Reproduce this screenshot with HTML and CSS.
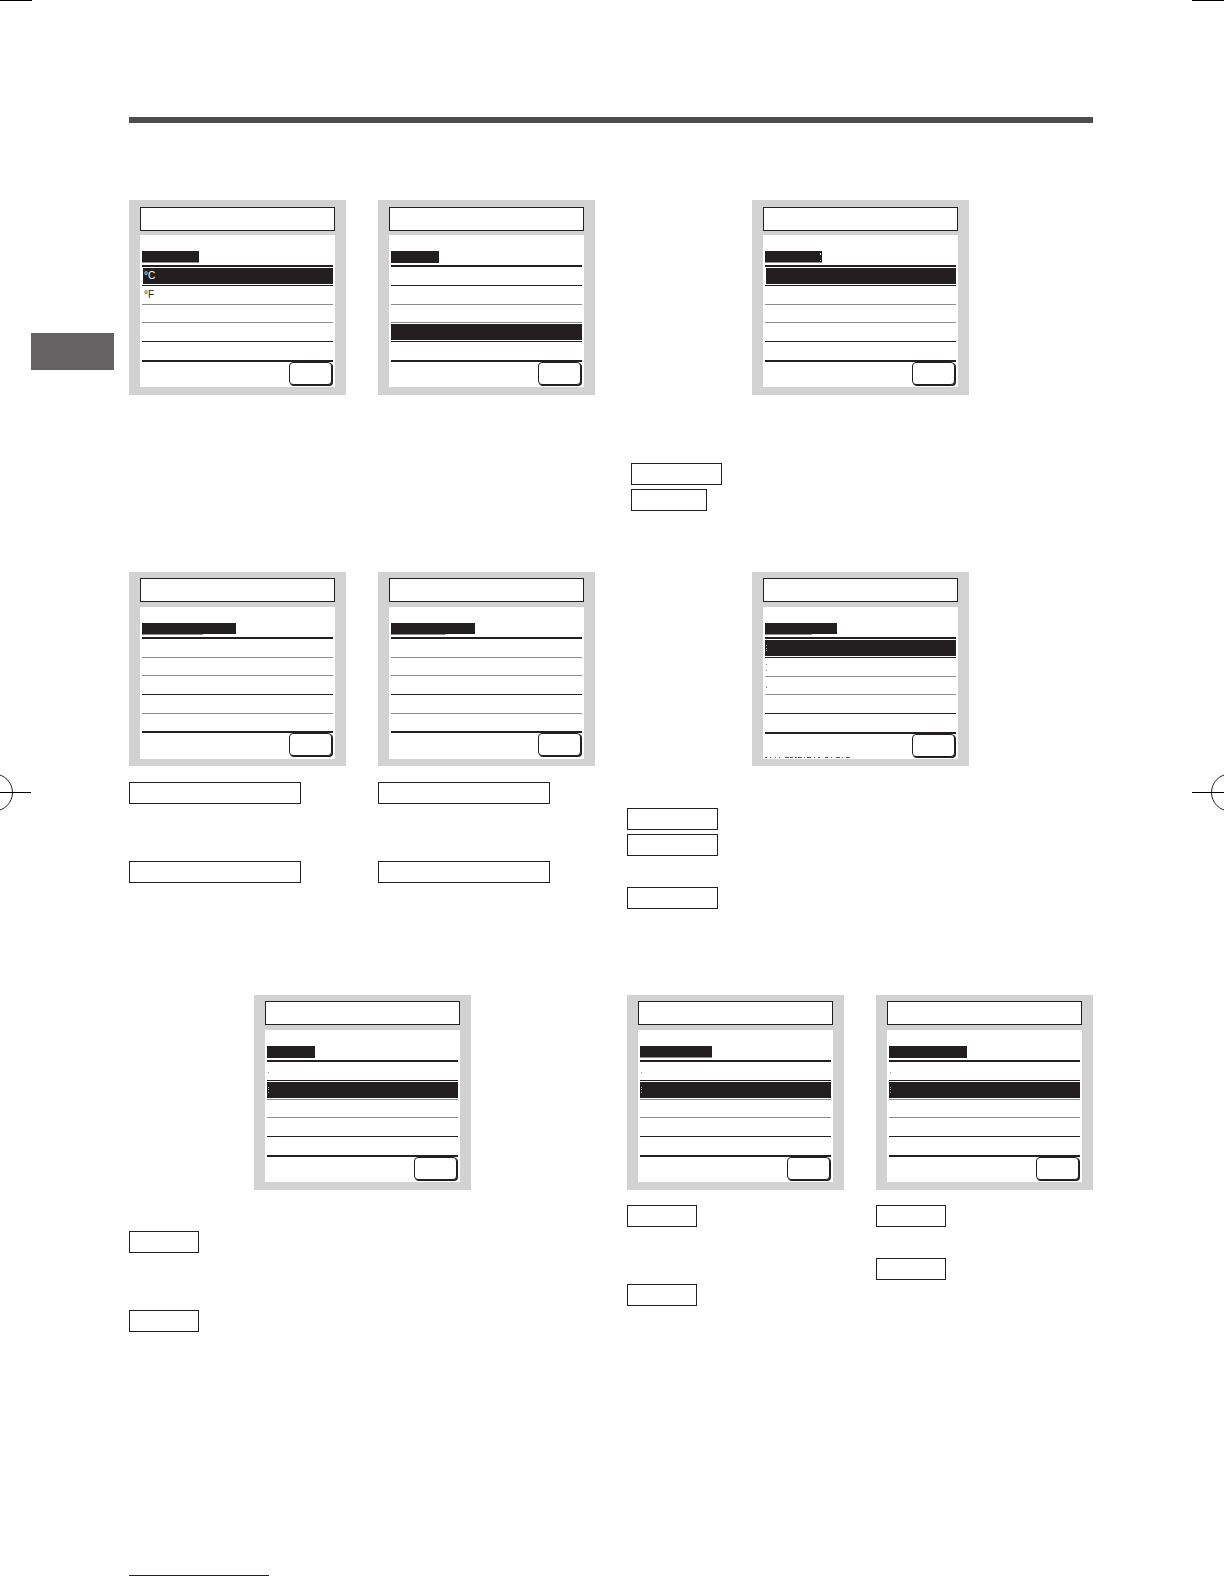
FILE: index.html
```
<!DOCTYPE html>
<html lang="en">
<head>
    <meta charset="UTF-8">
    <meta name="viewport" content="width=device-width, initial-scale=1.0">
    <title>Display settings</title>
    <link rel="stylesheet" href="styles.css">
</head>
<body>
    <aside class="margin">
        <div class="crop"></div>
        <div class="tab"></div>
        <svg class="mark" width="32" height="39" viewBox="0 0 32 39">
            <circle cx="-6" cy="19.5" r="18.5" fill="none" stroke="#222" />
            <rect x="0" y="19" width="31" height="1" />
        </svg>
    </aside>

    <div class="content">
        <header class="bar"></header>

        <main>
            <!-- units, language -->
            <section class="row first">
                <div class="group">
                    <div class="screens">
                        <div class="panel">
                            <div class="title"></div>
                            <div class="screen">
                                <div class="tag tag-s shade"></div>
                                <ul class="list">
                                    <li class="on inset">°C</li>
                                    <li>°F</li>
                                    <li></li>
                                    <li></li>
                                    <li></li>
                                </ul>
                                <button class="key" aria-label="Back"></button>
                            </div>
                        </div>
                        <div class="panel">
                            <div class="title"></div>
                            <div class="screen">
                                <div class="tag tag-xs"></div>
                                <ul class="list">
                                    <li></li>
                                    <li></li>
                                    <li></li>
                                    <li class="on"></li>
                                    <li></li>
                                </ul>
                                <button class="key" aria-label="Back"></button>
                            </div>
                        </div>
                    </div>
                </div>

                <div class="group">
                    <div class="screens">
                        <div class="panel">
                            <div class="title"></div>
                            <div class="screen">
                                <div class="tag tag-s shade">
                                    <svg class="dots" width="2" height="12" fill="#fff"><rect y="2" width="1" height="2" /><rect y="9" width="1" height="1" /></svg>
                                </div>
                                <ul class="list">
                                    <li class="on inset"></li>
                                    <li></li>
                                    <li></li>
                                    <li></li>
                                    <li></li>
                                </ul>
                                <button class="key" aria-label="Back"></button>
                            </div>
                        </div>
                    </div>
                    <div class="labels skip-2 indent">
                        <div class="label label-m"></div>
                        <div class="label label-n"></div>
                    </div>
                </div>
            </section>

            <section class="row second">
                <div class="group">
                    <div class="screens">
                        <div class="panel">
                            <div class="title"></div>
                            <div class="screen">
                                <div class="tag tag-xl shade-part"></div>
                                <ul class="list plain">
                                    <li></li>
                                    <li></li>
                                    <li></li>
                                    <li></li>
                                    <li></li>
                                </ul>
                                <button class="key" aria-label="Back"></button>
                            </div>
                        </div>
                        <div class="panel">
                            <div class="title"></div>
                            <div class="screen">
                                <div class="tag tag-l shade-part"></div>
                                <ul class="list plain">
                                    <li></li>
                                    <li></li>
                                    <li></li>
                                    <li></li>
                                    <li></li>
                                </ul>
                                <button class="key" aria-label="Back"></button>
                            </div>
                        </div>
                    </div>
                    <div class="pair">
                        <div class="labels">
                            <div class="label label-w"></div>
                            <div class="label label-w after-2"></div>
                        </div>
                        <div class="labels">
                            <div class="label label-w"></div>
                            <div class="label label-w after-2"></div>
                        </div>
                    </div>
                </div>

                <div class="group">
                    <div class="screens">
                        <div class="panel">
                            <div class="title"></div>
                            <div class="screen">
                                <div class="tag tag-m shade-part"></div>
                                <ul class="list">
                                    <li class="on"><svg class="dots" width="2" height="8" fill="#aaa"><rect x="1" y="1" width="1" height="1" /><rect x="1" y="4" width="1" height="1" /><rect x="1" y="6" width="1" height="1" /></svg></li>
                                    <li><svg class="dots" width="2" height="8" fill="#999"><rect x="1" y="1" width="1" height="1" /><rect x="1" y="7" width="1" height="1" /></svg></li>
                                    <li><svg class="dots" width="2" height="8" fill="#666"><rect x="1" y="5" width="1" height="1" /></svg></li>
                                    <li></li>
                                    <li></li>
                                </ul>
                                <div class="foot">
                                    <svg width="88" height="1" viewBox="0 0 88 1">
                                        <path d="M0 .5H2M5 .5H6M10 .5H11M14 .5H15M20 .5H24M25 .5H28M30 .5H32M33 .5H37M39 .5H40M42 .5H46M49 .5H50M53 .5H55M60 .5H63M66 .5H67M71 .5H75M77 .5H78M81 .5H85" stroke="#555" />
                                    </svg>
                                    <button class="key" aria-label="Back"></button>
                                </div>
                            </div>
                        </div>
                    </div>
                    <div class="labels skip-1">
                        <div class="label label-m"></div>
                        <div class="label label-m"></div>
                        <div class="label label-m after-1"></div>
                    </div>
                </div>
            </section>

            <section class="row third">
                <div class="group">
                    <div class="screens">
                        <div class="panel">
                            <div class="title"></div>
                            <div class="screen">
                                <div class="tag tag-xs"></div>
                                <ul class="list">
                                    <li><svg class="dots" width="2" height="8" fill="#999"><rect x="1" y="5" width="1" height="1" /></svg></li>
                                    <li class="on"><svg class="dots" width="2" height="8" fill="#aaa"><rect x="1" y="1" width="1" height="1" /><rect x="1" y="3" width="1" height="1" /><rect x="1" y="6" width="1" height="1" /></svg></li>
                                    <li></li>
                                    <li></li>
                                    <li></li>
                                </ul>
                                <button class="key" aria-label="Back"></button>
                            </div>
                        </div>
                    </div>
                    <div class="labels skip-1">
                        <div class="label label-s"></div>
                        <div class="label label-s after-2"></div>
                    </div>
                </div>

                <div class="group">
                    <div class="screens">
                        <div class="panel">
                            <div class="title"></div>
                            <div class="screen">
                                <div class="tag tag-m shade"></div>
                                <ul class="list">
                                    <li><svg class="dots" width="2" height="8" fill="#999"><rect x="1" y="5" width="1" height="1" /></svg></li>
                                    <li class="on"><svg class="dots" width="2" height="8" fill="#aaa"><rect x="1" y="1" width="1" height="1" /><rect x="1" y="3" width="1" height="1" /><rect x="1" y="6" width="1" height="1" /></svg></li>
                                    <li></li>
                                    <li></li>
                                    <li></li>
                                </ul>
                                <button class="key" aria-label="Back"></button>
                            </div>
                        </div>
                        <div class="panel">
                            <div class="title"></div>
                            <div class="screen">
                                <div class="tag tag-ml"></div>
                                <ul class="list">
                                    <li><svg class="dots" width="2" height="8" fill="#999"><rect x="1" y="5" width="1" height="1" /></svg></li>
                                    <li class="on"><svg class="dots" width="2" height="8" fill="#aaa"><rect x="1" y="1" width="1" height="1" /><rect x="1" y="3" width="1" height="1" /><rect x="1" y="6" width="1" height="1" /></svg></li>
                                    <li></li>
                                    <li></li>
                                    <li></li>
                                </ul>
                                <button class="key" aria-label="Back"></button>
                            </div>
                        </div>
                    </div>
                    <div class="pair">
                        <div class="labels">
                            <div class="label label-s"></div>
                            <div class="label label-s after-2"></div>
                        </div>
                        <div class="labels">
                            <div class="label label-s"></div>
                            <div class="label label-s after-1"></div>
                        </div>
                    </div>
                </div>
            </section>
        </main>

        <a class="site" href="#" aria-label="Website"></a>
    </div>

    <aside class="margin right">
        <div class="crop"></div>
        <svg class="mark" width="32" height="39" viewBox="0 0 32 39">
            <circle cx="38" cy="19.5" r="18.5" fill="none" stroke="#222" />
            <rect x="0" y="19" width="32" height="1" />
        </svg>
    </aside>
</body>
</html>
```
FILE: styles.css
```
:root {
    --ink: #231f20;
    --line: #8c8c8c;
    --frame: #d2d2d2;
}

* {
    box-sizing: border-box;
}

body {
    margin: 0;
    min-height: 100vh;
    display: grid;
    grid-template-columns: 129px 1fr 131px;
    background: #fff;
    color: var(--ink);
    font-family: "Liberation Sans", Arial, sans-serif;
    font-size: 10px;
}

/* page margins with the printer's marks */
.margin {
    display: flex;
    flex-direction: column;
    align-items: flex-start;
}

.margin.right {
    align-items: flex-end;
}

.crop {
    width: 32px;
    height: 1px;
    background: #000;
}

.tab {
    width: 83px;
    height: 37px;
    margin: 332px 0 0 31px;
    background: #656263;
}

.mark {
    margin-top: 403px;
}

.right .mark {
    margin-top: 772px;
}

.content {
    display: flex;
    flex-direction: column;
}

.bar {
    height: 6px;
    margin-top: 117px;
    background: #4d4d4d;
}

/* rows of screens */
.row {
    display: grid;
    grid-template-columns: 1fr 1fr;
    gap: 32px;
}

.first {
    margin-top: 77px;
}

.second {
    margin-top: 61px;
}

.third {
    margin-top: 86px;
}

.group {
    display: flex;
    flex-direction: column;
}

.screens {
    display: flex;
    justify-content: center;
    gap: 32px;
}

.panel {
    width: calc(50% - 16px);
    padding: 6px 11px 8px;
    background: var(--frame);
}

.title {
    height: 24px;
    margin-bottom: 5px;
    border: 1px solid var(--ink);
    background: #fff;
}

.first .panel {
    padding-top: 7px;
}

.first .title {
    margin-bottom: 4px;
}

.second .panel {
    padding-bottom: 7px;
}

.second .screens {
    margin-bottom: 1px;
}

.screen {
    display: flex;
    flex-direction: column;
    padding: 16px 2px 1px;
    background: #fff;
}

.tag {
    display: flex;
    justify-content: flex-end;
    height: 12px;
    margin-bottom: 2px;
    background: var(--ink);
}

.tag-xs { width: 48px; }
.tag-s { width: 57px; }
.tag-m { width: 72px; }
.tag-ml { width: 78px; }
.tag-l { width: 84px; }
.tag-xl { width: 94px; }

.shade {
    border-bottom: 1px solid var(--line);
}

.shade-part {
    background: linear-gradient(var(--ink), var(--ink)) 0 0 / 100% 11px no-repeat,
        linear-gradient(var(--line), var(--line)) 0 11px / 65% 1px no-repeat;
}

.list {
    margin: 0;
    padding: 0;
    list-style: none;
    border-top: 2px solid var(--ink);
}

.list li {
    display: flex;
    align-items: center;
    height: 19px;
    padding: 1px 0;
    border-bottom: 1px solid var(--ink);
    background-clip: content-box;
    line-height: 16px;
    text-indent: 2px;
}

.list li:nth-child(2),
.list li:nth-child(3) {
    border-color: var(--line);
}

.list li:nth-child(3) {
    height: 18px;
}

.list li:nth-child(5) {
    height: 20px;
    border-bottom-width: 2px;
}

.list.plain li:nth-child(1),
.list.plain li:nth-child(2),
.list.plain li:nth-child(4) {
    border-color: var(--line);
}

.list.plain li:nth-child(2) {
    height: 18px;
}

.list.plain li:nth-child(3) {
    height: 19px;
    border-color: var(--ink);
}

.list.plain li:nth-child(5) {
    height: 19px;
}

.list .on {
    background-color: var(--ink);
    color: #fff;
}

.list .inset {
    padding-left: 1px;
    text-indent: 1px;
}

.key {
    width: 43px;
    height: 23px;
    margin: 0 1px 1px 0;
    padding: 0;
    align-self: flex-end;
    border: 1px solid var(--ink);
    border-radius: 4px;
    background: #fff;
    box-shadow: 1px 1px 0 var(--ink);
}

.plain + .key {
    margin-bottom: 2px;
}

.foot {
    display: flex;
    justify-content: space-between;
    align-items: flex-end;
}

/* boxed option names */
.pair {
    display: grid;
    grid-template-columns: 1fr 1fr;
    gap: 32px;
}

.labels {
    display: flex;
    flex-direction: column;
    gap: 4px;
    margin-top: 15px;
}

.skip-1 {
    margin-top: 41px;
}

.skip-2 {
    margin-top: 68px;
}

.indent {
    padding-left: 4px;
}

.label {
    height: 22px;
    border: 1px solid var(--ink);
}

.label-s { width: 70px; }
.label-n { width: 76px; }
.label-m { width: 91px; }
.label-w { width: 172px; }

.after-1 {
    margin-top: 27px;
}

.after-2 {
    margin-top: 53px;
}

.site {
    width: 140px;
    margin-top: auto;
    margin-bottom: 8px;
    border-bottom: 1px solid #1414a0;
}
```
